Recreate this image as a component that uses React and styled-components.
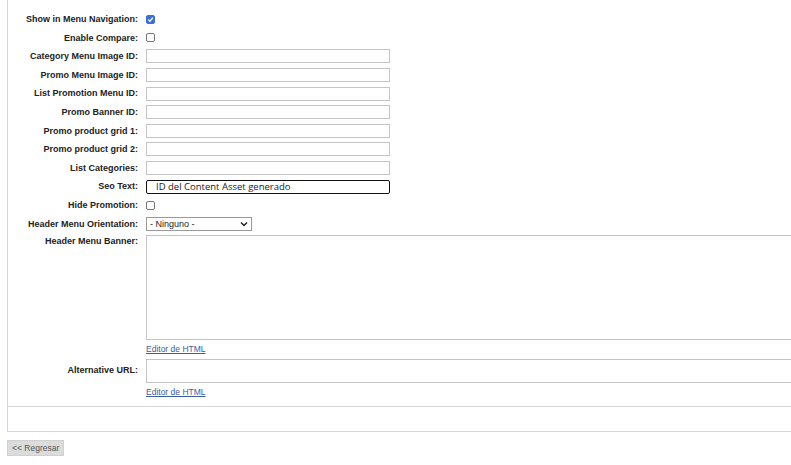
import React from 'react';
import styled, { createGlobalStyle } from 'styled-components';

const Global = createGlobalStyle`
  html, body { margin: 0; background: #fff; overflow: hidden; }
  body { font-family: "Liberation Sans", Arial, sans-serif; color: #222; }
`;

const Page = styled.div`
  padding: 0 0 0 7px;
  width: 800px;
`;

const Panel = styled.div`
  border: 1px solid #d8d8d8;
  border-top: none;
  overflow: hidden;
`;

const Form = styled.div`
  display: grid;
  grid-template-columns: 130px 1fr;
  column-gap: 8px;
  align-items: center;
  padding: 10px 0 5px;
  border-bottom: 1px solid #d8d8d8;
`;

const Label = styled.div`
  font-size: 9px;
  font-weight: bold;
  text-align: right;
  align-self: ${(p) => (p.$top ? 'start' : 'center')};
  padding-top: ${(p) => (p.$top ? '3px' : '0')};
  line-height: ${(p) => (p.$top ? '11px' : '18.6px')};
  white-space: nowrap;
`;

const Cell = styled.div`
  min-height: 18.6px;
  display: flex;
  flex-direction: column;
  justify-content: center;
  padding-top: ${(p) => p.$pt || 0}px;
`;

const TextInput = styled.div`
  height: 12px;
  border: 1px solid ${(p) => (p.$focus ? '#111' : '#c4c4c4')};
  border-radius: ${(p) => (p.$focus ? '2px' : '0')};
  font-family: "Open Sans", "Noto Sans", sans-serif;
  font-size: 9.5px;
  line-height: 12px;
  padding-left: ${(p) => (p.$focus ? '9px' : '0')};
  width: ${(p) => (p.$focus ? '233px' : '242px')};
`;

const Check = styled.div`
  width: 7px;
  height: 7px;
  border: 1px solid ${(p) => (p.$on ? '#3d6fd6' : '#777')};
  border-radius: 2px;
  background: ${(p) => (p.$on ? '#3d6fd6' : '#fff')};
  display: flex;
  align-items: center;
  justify-content: center;
`;

const Select = styled.div`
  width: 98px;
  height: 12px;
  border: 1px solid #999;
  display: flex;
  align-items: center;
  justify-content: space-between;
  font-size: 9px;
  padding: 0 3px;
`;

const Area = styled.div`
  height: ${(p) => p.$h}px;
  border: 1px solid #c4c4c4;
`;

const Link = styled.a`
  font-size: 8.5px;
  color: #3a5d9c;
  text-decoration: underline;
  line-height: 16px;
`;

const Footer = styled.div`
  height: 24px;
`;

const Button = styled.button`
  margin-top: 8px;
  background: #dcdcdc;
  border: 1px solid #d0d0d0;
  font-family: "Liberation Sans", Arial, sans-serif;
  font-size: 8.5px;
  color: #555;
  padding: 2px 4px;
  height: 16px;
`;

const rows = [
  ['Show in Menu Navigation:', 'checkOn'],
  ['Enable Compare:', 'check'],
  ['Category Menu Image ID:', 'text'],
  ['Promo Menu Image ID:', 'text'],
  ['List Promotion Menu ID:', 'text'],
  ['Promo Banner ID:', 'text'],
  ['Promo product grid 1:', 'text'],
  ['Promo product grid 2:', 'text'],
  ['List Categories:', 'text'],
  ['Seo Text:', 'seo'],
  ['Hide Promotion:', 'check'],
  ['Header Menu Orientation:', 'select'],
];

const Field = ({ type }) => {
  if (type === 'checkOn')
    return (
      <Check $on>
        <svg width="7" height="7" viewBox="0 0 8 8"><path d="M1.5 4.2 L3.3 6 L6.6 2" stroke="#fff" strokeWidth="1.4" fill="none" /></svg>
      </Check>
    );
  if (type === 'check') return <Check />;
  if (type === 'seo') return <TextInput $focus>ID del Content Asset generado</TextInput>;
  if (type === 'select')
    return (
      <Select>
        <span>- Ninguno -</span>
        <svg width="8" height="6" viewBox="0 0 8 6"><path d="M1 1.5 L4 4.5 L7 1.5" stroke="#222" strokeWidth="1.5" fill="none" /></svg>
      </Select>
    );
  return <TextInput />;
};

export default function App() {
  return (
    <Page>
      <Global />
      <Panel>
        <Form>
          {rows.map(([l, t]) => (
            <React.Fragment key={l}>
              <Label>{l}</Label>
              <Cell><Field type={t} /></Cell>
            </React.Fragment>
          ))}
          <Label $top>Header Menu Banner:</Label>
          <Cell $pt={2}><Area $h={103} /></Cell>
          <div />
          <Cell><Link href="#">Editor de HTML</Link></Cell>
          <Label>Alternative URL:</Label>
          <Cell><Area $h={22} /></Cell>
          <div />
          <Cell><Link href="#">Editor de HTML</Link></Cell>
        </Form>
        <Footer />
      </Panel>
      <Button>&lt;&lt; Regresar</Button>
    </Page>
  );
}
